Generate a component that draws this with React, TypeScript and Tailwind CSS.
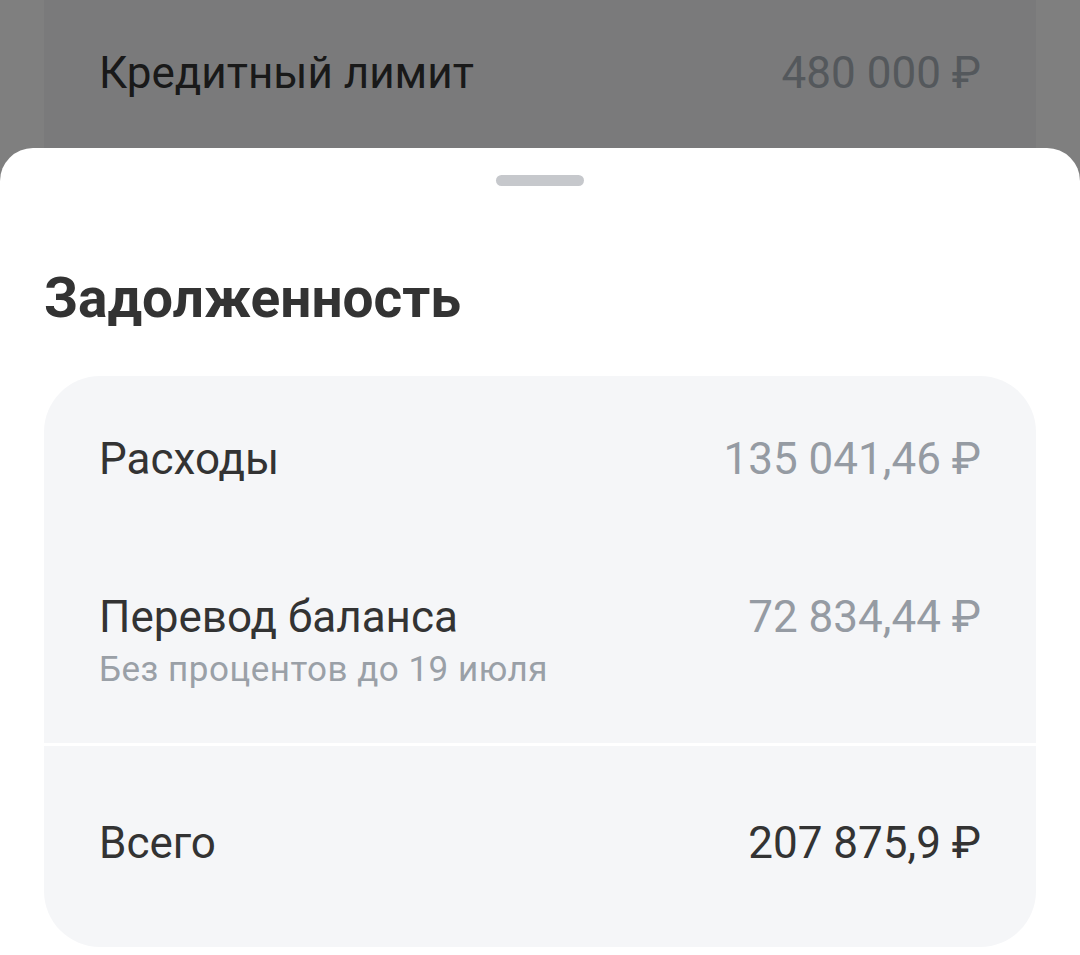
import React from "react";

const font = { fontFamily: "Roboto, 'Noto Sans', sans-serif" };

function Row({
  label,
  value,
  hint,
  strong,
}: {
  label: string;
  value: string;
  hint?: string;
  strong?: boolean;
}) {
  return (
    <div className="flex items-start justify-between">
      <div className="flex flex-col">
        <span className="text-[44px] leading-[52px] text-[#333333]">{label}</span>
        {hint && (
          <span className="mt-[6px] text-[35px] leading-[41px] tracking-[0.5px] text-[#9aa0a7]">
            {hint}
          </span>
        )}
      </div>
      <span
        className={`text-[44px] leading-[52px] ${strong ? "text-[#333333]" : "text-[#959ba3]"}`}
      >
        {value}
      </span>
    </div>
  );
}

export default function App() {
  return (
    <div className="relative h-[955px] w-[1080px] overflow-hidden bg-white" style={font}>
      {/* page behind the sheet */}
      <div className="mx-[44px] h-[300px] bg-[#f4f5f7] pl-[55px] pr-[55px] pt-[47px]">
        <div className="flex items-start justify-between">
          <span className="text-[44px] leading-[52px] text-[#333333]">Кредитный лимит</span>
          <span className="text-[44px] leading-[52px] text-[#a9b0b8]">480 000 ₽</span>
        </div>
      </div>

      {/* dim overlay */}
      <div className="absolute inset-0 bg-black/50" />

      {/* bottom sheet */}
      <div className="absolute inset-x-0 top-[148px] bottom-0 rounded-t-[33px] bg-white">
        <div className="flex justify-center pt-[27px]">
          <div className="h-[11px] w-[88px] rounded-full bg-[#c6c8cc]" />
        </div>

        <h2 className="mt-[80px] pl-[44px] text-[55px] font-bold leading-[64px] text-[#333333]">
          Задолженность
        </h2>

        <div className="mx-[44px] mt-[46px] overflow-hidden rounded-[56px] bg-white">
          <div className="bg-[#f5f6f8] pl-[55px] pr-[55px] pt-[57px] pb-[53px]">
            <Row label="Расходы" value="135 041,46 ₽" />
            <div className="h-[106px]" />
            <Row
              label="Перевод баланса"
              value="72 834,44 ₽"
              hint="Без процентов до 19 июля"
            />
          </div>
          <div className="mt-[3px] bg-[#f5f6f8] pl-[55px] pr-[55px] pt-[71px] pb-[78px]">
            <Row label="Всего" value="207 875,9 ₽" strong />
          </div>
        </div>
      </div>
    </div>
  );
}
